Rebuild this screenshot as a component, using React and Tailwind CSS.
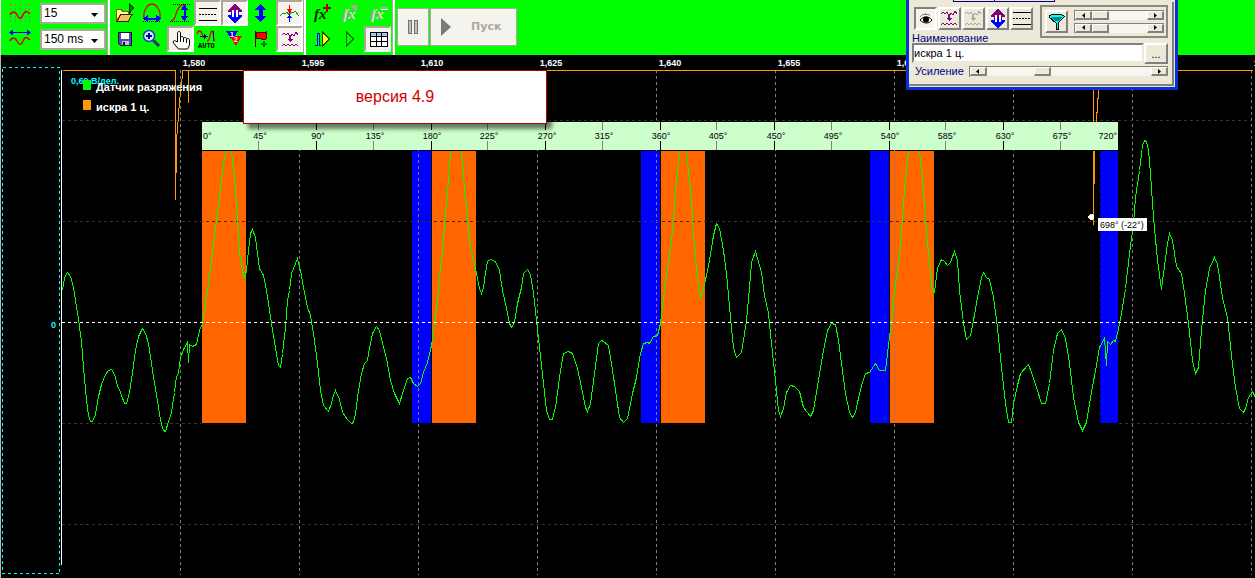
import React from 'react';

const GRID_X = [180, 299, 418, 537, 656, 775, 894, 1013, 1132, 1251];
const GRID_Y = [120, 221, 423, 524];

const TIMES = ['1,580', '1,595', '1,610', '1,625', '1,640', '1,655', '1,670', '1,685', '1,700', '1,715'];

const DEGREES = Array.from({ length: 17 }, (_, i) => i * 45);
const RULER_X = 202;
const RULER_W = 916;

// start x, width, colour
const BANDS = [
  [202, 44, '#ff6600'],
  [412, 19, '#0000ff'],
  [432, 44, '#ff6600'],
  [641, 19, '#0000ff'],
  [661, 44, '#ff6600'],
  [870, 19, '#0000ff'],
  [890, 44, '#ff6600'],
  [1100, 18, '#0000ff'],
];

// vacuum sensor samples; the signal is cut off where it runs behind the ruler
const VACUUM = [
  '62,290 64,277 67,272 70,276 73,287 75,300 78,319 81,341 83,367 86,400 88,415 90,421 92,421 95,414 98,396 101,384 105,374 108,370 111,369 114,374 117,385 120,392 124,403 126,403 129,392 132,372 135,350 138,336 142,328 145,333 148,343 151,363 154,383 157,400 160,420 163,430 165,431 168,421 171,412 174,392 176,376 178,373 180,357 183,349 187,342 188,362 189,344 192,346 196,344 199,330 202,323 207,290 211,260 215,227 219,197 222,170 225,151',
  '231,151 234,177 237,217 239,253 242,270 244,278 246,270 248,250 250,233 252,229 255,237 257,253 259,268 263,275 266,290 268,303 271,323 275,347 278,365 280,367 282,353 285,327 287,300 289,290 291,273 295,263 297,258 300,270 303,287 307,307 310,315 313,333 317,363 320,390 323,405 328,411 331,403 333,395 335,390 339,399 342,412 347,419 351,423 353,422 355,413 358,390 361,373 364,363 367,360 369,348 372,333 376,326 379,330 382,343 386,358 390,380 394,393 399,403 402,393 407,378 410,377 413,383 417,386 420,383 423,372 427,362 431,345 434,323 437,300 438,287 442,250 445,213 449,170 450,151',
  '461,151 464,187 467,220 470,247 475,268 479,288 481,293 483,287 485,272 487,261 490,259 495,261 499,270 502,290 506,308 509,323 511,327 514,322 517,303 521,287 523,273 527,269 530,274 533,293 536,320 539,347 543,383 546,410 549,419 552,419 555,407 559,377 563,353 568,351 572,353 577,368 581,387 585,407 587,411 590,403 594,373 598,343 601,340 603,341 608,345 611,363 615,390 619,417 623,422 627,418 632,393 636,377 640,353 643,343 647,342 649,343 653,336 657,335 660,323 662,307 665,283 669,253 673,223 674,200 679,151',
  '686,151 691,200 693,233 696,267 699,293 700,297 702,292 706,275 709,260 713,235 716,223 719,228 723,250 726,273 730,317 733,347 736,357 741,352 743,340 746,320 749,287 751,262 755,251 757,258 761,272 764,295 768,313 771,343 775,380 778,410 780,416 783,408 786,392 790,385 794,386 799,391 803,407 810,416 813,410 818,380 823,350 827,330 831,323 835,324 838,340 841,363 845,393 849,412 852,417 855,412 859,393 862,382 865,373 869,372 875,363 879,370 885,370 887,353 889,337 892,313 895,283 899,257 902,217 905,177 908,151',
  '919,151 922,177 925,220 929,263 932,292 934,292 937,268 941,259 944,261 947,265 950,262 954,251 957,260 959,290 963,323 966,339 970,335 973,320 977,297 981,277 983,272 986,277 989,279 993,297 997,327 1001,367 1005,403 1008,422 1011,422 1013,403 1017,385 1020,373 1028,364 1031,372 1037,390 1041,403 1045,403 1049,383 1053,350 1057,333 1061,329 1065,338 1069,363 1073,397 1078,422 1082,430 1086,422 1090,397 1095,370 1099,347 1104,338 1106,365 1107,341 1110,344 1113,340 1115,341 1118,328 1121,313 1125,288 1129,253 1133,223 1135,197 1139,170 1142,145 1144,140 1146,141 1148,150 1150,173 1153,217 1157,260 1161,289 1163,273 1167,243 1169,233 1172,240 1176,266 1181,273 1184,293 1188,323 1192,360 1195,373 1198,367 1201,330 1205,290 1209,268 1214,257 1217,264 1222,297 1227,317 1231,355 1235,387 1239,408 1243,412 1245,408 1248,397 1252,391 1255,397',
];

const SPARK = [
  '62,70 175,70 175,199',
  '176,172 176,140 177,128 178,115 179,100 181,88 182,70 188,70 188,102',
  '182,78 182,70 1252,70',
  '1093,70 1093,121',
  '1098,70 1098,98 1097,98 1097,112 1096,112 1096,121',
];

const WAVE = 'M0 4 l2 -2 l2 2 l2 -2 l2 4 l2 -3 l2 2 l2 -4 l2 3';

/* ---------- toolbar ---------- */

const Tool = ({ label, box, pressed, children }) => (
  <button
    type="button"
    aria-label={label}
    aria-pressed={pressed}
    className={
      pressed
        ? 'h-[26px] w-[27px] border-2 border-t-[#aca899] border-l-[#aca899] border-r-white border-b-white bg-[#f5f3ec]'
        : 'h-[26px] w-[27px]'
    }
  >
    <svg viewBox={box} className={pressed ? '-m-0.5 h-[26px] w-[27px]' : 'h-[26px] w-[27px]'} fill="none" shapeRendering="crispEdges">
      {children}
    </svg>
  </button>
);

const Divider = () => (
  <div className="w-[3px] shrink-0 border-l border-r-2 border-l-[#aca899] border-r-white" />
);

const Combo = ({ label, value }) => (
  <div className="relative h-[21px] w-[66px] border-2 border-[#aca899] bg-white">
    <select
      aria-label={label}
      defaultValue={value}
      className="block h-full w-full appearance-none bg-white pl-0.5 font-['Liberation_Sans',sans-serif] text-[12px] leading-[17px] text-black outline-none"
    >
      <option>{value}</option>
    </select>
    <svg viewBox="0 0 7 4" className="pointer-events-none absolute top-2 right-1.5 h-1 w-[7px]">
      <path d="M0 0h7L3.5 4z" fill="#000" />
    </svg>
  </div>
);

const LinesGlyph = ({ x, y, width = 18 }) => (
  <g stroke="#000" strokeWidth="1">
    <path d={`M${x} ${y + 0.5}h${width} M${x} ${y + 12.5}h${width}`} />
    <path d={`M${x} ${y + 6.5}h${width}`} strokeDasharray="2 1" />
  </g>
);

const UpDownGlyph = ({ x, y }) => (
  <g transform={`translate(${x} ${y})`}>
    <path d="M7 0L14 6V8H11V10H3V8H0V6z" fill="#800080" />
    <path d="M7 19L14 13V11H11V9H3V11H0V13z" fill="#0000ff" />
    <path d="M4 6h2v7h-2zM8 6h2v7h-2z" fill="#fff" />
  </g>
);

const WavesGlyph = ({ x, y, color = '#800080' }) => (
  <g transform={`translate(${x} ${y})`}>
    <path d={WAVE} stroke={color} strokeWidth="1.3" />
    <path d="M0 15 l2 -2 l2 2 l2 -2 l2 2 l2 -2 l2 2 l2 -2 l2 2" stroke={color} strokeWidth="1.3" />
    <path d="M7 6h2v2h2l-3 3l-3 -3h2z" fill={color} />
  </g>
);

const ChannelTools = () => (
  <div className="flex w-[107px] shrink-0 border-l border-white pt-[3px] pl-2">
    <div className="flex flex-col gap-[5px]">
      <svg viewBox="9 4 22 21" className="h-[21px] w-[22px]" fill="none">
        <path d="M10.5 5v18M15.5 5v18M20.5 5v18M25.5 5v18M29.5 5v18" stroke="#808080" strokeDasharray="2 2" shapeRendering="crispEdges" />
        <path d="M10 16C12 12 15 12 17 16S21 21 23 16S27 12 30 15" stroke="#d40000" strokeWidth="1.4" />
      </svg>
      <svg viewBox="9 30 22 21" className="h-[21px] w-[22px]" fill="none">
        <path d="M10 33.5h20" stroke="#00f" />
        <path d="M9 33.5l4-3v6zM31 33.5l-4-3v6z" fill="#00f" />
        <path d="M10 42C12 38 15 38 17 42S21 47 23 42S27 38 30 41" stroke="#d40000" strokeWidth="1.4" />
      </svg>
    </div>
    <div className="ml-[9px] flex flex-col gap-[5px]">
      <Combo label="Развёртка" value="15" />
      <Combo label="Длительность" value="150 ms" />
    </div>
  </div>
);

const ViewTools = () => (
  <div className="grid w-[193px] shrink-0 grid-cols-7 content-start pl-0.5">
    <Tool label="Открыть" box="113 0 27 26">
      <path d="M117.500 9.500h5l1 2h6v3h-8l-4 6z" fill="#ffff99" stroke="#806000" />
      <path d="M122 14.500h11l-4 7h-11z" fill="#f0c060" stroke="#402000" />
      <path d="M130.500 13v-9l4 4z" fill="#008000" stroke="#004000" />
    </Tool>
    <Tool label="Ширина" box="140 0 27 26">
      <path d="M145 18c-1-8 4-14 8-14s9 6 8 14" stroke="#e00000" strokeWidth="1.3" shapeRendering="auto" />
      <path d="M144 21.500h18" stroke="#000" strokeDasharray="1 1" />
      <path d="M144 18.500l5-4v3h8v-3l5 4l-5 4v-3h-8v3z" fill="#0000ff" />
    </Tool>
    <Tool label="Высота" box="167 0 27 26">
      <path d="M171 21c5-1 4-6 6-10s4-7 9-6" stroke="#e00000" strokeWidth="1.300" shapeRendering="auto" />
      <path d="M173 4.500h18M170 21.500h20" stroke="#000" strokeDasharray="1 1" />
      <path d="M184.500 5l4 5h-3v6h3l-4 5l-4-5h3v-6h-3z" fill="#0000ff" />
    </Tool>
    <Tool label="Линии" box="194 0 27 26" pressed>
      <LinesGlyph x={199} y={8} />
    </Tool>
    <Tool label="Сдвиг" box="221 0 27 26" pressed>
      <UpDownGlyph x={228} y={4} />
    </Tool>
    <Tool label="Масштаб" box="248 0 27 26">
      <path d="M260.500 4l6 6h-4v6h4l-6 6l-6-6h4v-6h-4z" fill="#0000ff" />
    </Tool>
    <Tool label="Центр" box="275 0 27 26" pressed>
      <path d="M279 16l3-3l2 1l2-2l2 3l2-3l2 1l2-2l4 5" stroke="#00a000" />
      <path d="M288.500 5v6" stroke="#f00" />
      <path d="M286 9h5l-2.500 5z" fill="#f00" />
      <path d="M288.500 17v5" stroke="#00f" />
      <path d="M286 18h5l-2.500-4z" fill="#00f" />
    </Tool>

    <Tool label="Сохранить" box="113 26 27 26">
      <path d="M119.500 32.500h13v13h-11l-2-2z" fill="#5050a0" stroke="#101040" />
      <path d="M122 33h8v6h-8z" fill="#fff" />
      <path d="M123 41h7v4h-7z" fill="#c0c0d0" />
      <path d="M124 42h2v3h-2z" fill="#101040" />
    </Tool>
    <Tool label="Увеличить" box="140 26 27 26">
      <path d="M154 40l6 6" stroke="#303070" strokeWidth="3" shapeRendering="auto" />
      <circle cx="150" cy="36" r="5.500" fill="#d8ecff" stroke="#2040a0" strokeWidth="1.500" shapeRendering="auto" />
      <path d="M147 36h6M150 33v6" stroke="#0000c0" strokeWidth="2" />
    </Tool>
    <Tool label="Рука" box="167 26 27 26" pressed>
      <path
        d="M177.500 42v-9c0-2 3-2 3 0v5c0-2 3-2 3 0v1c0-2 3-2 3 0v1c0-2 3-2 3 0v5l-2 4h-9l-5-6c-1-2 1-3 2-2z"
        fill="#fff"
        stroke="#000"
        shapeRendering="auto"
      />
      <path d="M180.500 38v4M183.500 39v3M186.500 40v3" stroke="#000" />
    </Tool>
    <Tool label="Авто" box="194 26 27 26">
      <path d="M197 34c1-4 4-4 5 0s3 4 4 2" stroke="#e00000" strokeWidth="1.300" shapeRendering="auto" />
      <path d="M207 41c3 1 3-10 5-10s1 10 3 10" stroke="#e00000" strokeWidth="1.300" shapeRendering="auto" />
      <path d="M200 36.500h5M213.500 31v10" stroke="#000080" />
      <path d="M204 34l4 2.500l-4 2.500z" fill="#000080" />
      <text x="198" y="48" fontSize="7" fontWeight="700" fill="#000" className="font-['Liberation_Mono',monospace]">AUTO</text>
    </Tool>
    <Tool label="Маркеры" box="221 26 27 26">
      <path d="M226 31h12l-6 9z" fill="#0000ff" />
      <path d="M230 36h12l-6 10z" fill="#ff0000" />
      <text x="230" y="37" fontSize="7" fontWeight="700" fill="#fff" className="font-['Liberation_Sans',sans-serif]">1</text>
      <text x="234" y="42" fontSize="7" fontWeight="700" fill="#fff" className="font-['Liberation_Sans',sans-serif]">2</text>
    </Tool>
    <Tool label="Флаг" box="248 26 27 26">
      <path d="M255.500 31v16" stroke="#400000" />
      <path d="M256 33l3-1l4 1l3-1v7l-3 1l-4-2l-3 1z" fill="#ff0000" stroke="#600" />
      <path d="M261 44h6M264 41v6" stroke="#008000" strokeWidth="2" />
    </Tool>
    <Tool label="Фильтр" box="275 26 27 26" pressed>
      <WavesGlyph x={281} y={31} />
    </Tool>
  </div>
);

const Fx = ({ x, color }) => (
  <text x={x} y="19" fontSize="15" fontStyle="italic" fontWeight="700" fill={color} className="font-['Liberation_Serif',serif]">
    fx
  </text>
);

const FunctionTools = () => (
  <div className="grid w-[86px] shrink-0 grid-cols-3 content-start pl-0.5">
    <Tool label="Добавить функцию" box="308 0 27 26">
      <Fx x={314} color="#002000" />
      <path d="M323 8h8M327 4v8" stroke="#a00000" strokeWidth="2" />
    </Tool>
    <Tool label="Изменить функцию" box="335 0 27 26">
      <Fx x={342} color="#fff" />
      <Fx x={341} color="#aca899" />
      <path d="M349 5h7v8z" fill="#aca899" />
    </Tool>
    <Tool label="Удалить функцию" box="362 0 27 26">
      <Fx x={369} color="#fff" />
      <Fx x={368} color="#aca899" />
      <path d="M378 8h8" stroke="#aca899" strokeWidth="2" />
      <path d="M379 9.500h7" stroke="#fff" />
    </Tool>
    <Tool label="Шаг" box="308 26 27 26">
      <path d="M315 45.500h2v-12h2v12h2" stroke="#00f" />
      <path d="M322.500 32v14l7-7z" fill="#ffff00" stroke="#404000" />
    </Tool>
    <Tool label="Воспроизвести" box="335 26 27 26">
      <path d="M345.500 32v14l7-7z" stroke="#007000" />
    </Tool>
    <Tool label="Таблица" box="362 26 27 26" pressed>
      <path d="M368.500 32.500h17v14h-17z" fill="#fff" stroke="#000" />
      <path d="M369 33h16v3h-16z" fill="#a0c8f0" />
      <path d="M368 36.500h18M368 41.500h18M374.500 32v14M379.500 32v14" stroke="#000" />
    </Tool>
  </div>
);

const RunButtons = () => (
  <div className="flex gap-px pt-2 pl-0.5">
    <button type="button" aria-label="Пауза" className="flex h-[38px] w-8 items-center justify-center border border-[#aca899] bg-[#f4f3ee]">
      <svg viewBox="0 0 12 16" className="h-4 w-3" fill="#c0c0c0" stroke="#707070" shapeRendering="crispEdges">
        <path d="M1.500 1.500h3v13h-3zM7.500 1.500h3v13h-3z" />
      </svg>
    </button>
    <button type="button" className="flex h-[38px] w-[87px] items-center gap-5 border border-[#aca899] bg-[#f4f3ee] pl-2.5">
      <svg viewBox="0 0 10 18" className="h-[18px] w-2.5">
        <path d="M0 0L10 9L0 18z" fill="#7a7a7a" />
      </svg>
      <span className="font-['DejaVu_Sans',sans-serif] text-[11px] font-bold text-[#aca899]">Пуск</span>
    </button>
  </div>
);

/* ---------- chart ---------- */

const Chart = () => (
  <svg viewBox="0 55 1255 523" className="block w-full bg-black font-['Liberation_Sans',sans-serif]" fill="none" shapeRendering="crispEdges">
    <path d="M0.500 55v523" stroke="#b4b4b4" />
    <rect x="2.500" y="67.500" width="57" height="506" stroke="#00ffff" strokeDasharray="3 3" />

    {TIMES.map((t, i) => (
      <text key={t} x={194 + i * 119} y="66" fontSize="9" fontWeight="700" textAnchor="middle" fill="#fff">{t}</text>
    ))}

    {BANDS.map(([x, w, color]) => (
      <rect key={x} x={x} y="151" width={w} height="272" fill={color} />
    ))}
    <path d="M1100.500 151v272" stroke="#000060" strokeDasharray="3 3" />

    {GRID_X.map((x) => (
      <path key={x} d={`M${x + 0.5} 70v505`} stroke="#808080" strokeDasharray="3 3" />
    ))}
    {GRID_Y.map((y) => (
      <path
        key={y}
        d={y === 423 ? 'M62 423.500H202M1119 423.500H1252' : `M62 ${y + 0.5}H1252`}
        stroke="#333"
        strokeDasharray="3 3"
      />
    ))}
    <path d="M61.500 70v495" stroke="#fff" />

    {SPARK.map((points) => (
      <polyline key={points} points={points} transform="translate(0.500 0.500)" stroke="#ff9900" />
    ))}
    <path d="M1093 151h2v33h-1v41h-1z" fill="#ff9900" />

    {VACUUM.map((points) => (
      <polyline key={points} points={points} transform="translate(0.500 0.500)" stroke="#00ff00" />
    ))}
    <path d="M62 322.500H1252" stroke="#fff" strokeDasharray="3 3" />

    <rect x={RULER_X} y="122" width={RULER_W} height="28" fill="#ccffcc" />
    {DEGREES.slice(1, -1).map((deg) => {
      const x = Math.round(RULER_X + (deg * RULER_W) / 720) - (deg % 180 ? 1 : 0);
      return (
        <path key={deg} d={`M${x + 0.5} 122v8M${x + 0.5} 141v9`} stroke={deg % 90 ? '#808080' : '#000'} />
      );
    })}
    {DEGREES.map((deg) => {
      const x = deg === 0 ? 203 : deg === 720 ? 1117 : Math.round(RULER_X + (deg * RULER_W) / 720) + 1;
      const anchor = deg === 0 ? 'start' : deg === 720 ? 'end' : 'middle';
      return (
        <text key={deg} x={x} y="139" fontSize="9" textAnchor={anchor} fill="#000">{`${deg}°`}</text>
      );
    })}

    <text x="71" y="84" fontSize="9" fontWeight="700" fill="#00ffff">0,69 В/дел.</text>
    <text x="51" y="328" fontSize="9" fontWeight="700" fill="#00ffff">0</text>
    <rect x="83" y="80" width="8" height="10" fill="#00ff00" />
    <rect x="83" y="100" width="8" height="10" fill="#ff9900" />
    <text x="96" y="91" fontSize="11" fontWeight="700" fill="#fff">Датчик разряжения</text>
    <text x="96" y="111" fontSize="11" fontWeight="700" fill="#fff">искра 1 ц.</text>

    <path d="M1090 214h2l2 2v2l-2 2h-2l-2-2v-2z" fill="#fff" />
    <rect x="1098" y="218" width="49" height="13" fill="#fff" />
    <text x="1100" y="228" fontSize="9" fill="#000">698° (-22°)</text>
  </svg>
);

/* ---------- channel window ---------- */

const PanelButton = ({ label, pressed, children }) => (
  <button
    type="button"
    aria-label={label}
    aria-pressed={pressed}
    className={
      pressed
        ? 'flex size-[23px] shrink-0 items-center justify-center border-2 border-t-[#808080] border-l-[#808080] border-r-white border-b-white bg-[#f5f3ec]'
        : 'flex size-[23px] shrink-0 items-center justify-center border-2 border-t-white border-l-white border-r-[#808080] border-b-[#808080] bg-[#ece9d8]'
    }
  >
    <svg viewBox="0 0 19 19" className="size-[19px]" fill="none" shapeRendering="crispEdges">
      {children}
    </svg>
  </button>
);

const Arrow = ({ d }) => (
  <span className="flex h-[9px] w-[17px] shrink-0 items-center justify-center border-t border-l border-r-2 border-b-2 border-t-white border-l-white border-r-[#808080] border-b-[#808080] bg-[#ece9d8]">
    <svg viewBox="0 0 3 5" className="h-[5px] w-[3px]"><path d={d} fill="#000" /></svg>
  </span>
);

const SLIDER =
  "h-[9px] w-0 min-w-0 flex-1 appearance-none bg-[#f7f5ee] [&::-webkit-slider-thumb]:h-[9px] [&::-webkit-slider-thumb]:w-[17px] [&::-webkit-slider-thumb]:appearance-none [&::-webkit-slider-thumb]:border-t [&::-webkit-slider-thumb]:border-l [&::-webkit-slider-thumb]:border-r-2 [&::-webkit-slider-thumb]:border-b-2 [&::-webkit-slider-thumb]:border-t-white [&::-webkit-slider-thumb]:border-l-white [&::-webkit-slider-thumb]:border-r-[#808080] [&::-webkit-slider-thumb]:border-b-[#808080] [&::-webkit-slider-thumb]:bg-[#ece9d8]";

const Slider = ({ id, label, value }) => (
  <div className="flex h-[11px] min-w-0 flex-1 items-center border-t border-l border-[#808080]">
    <Arrow d="M3 0v5L0 2.5z" />
    <input id={id} type="range" aria-label={label} defaultValue={value} className={SLIDER} />
    <Arrow d="M0 0v5L3 2.5z" />
  </div>
);

const ChannelWindow = () => (
  <section className="absolute top-0 left-[906px] w-[272px] border-x-[3px] border-b-[3px] border-[#0831d9] bg-[#ece9d8] font-['Liberation_Sans',sans-serif] text-[11px] text-[#000080]">
    <div className="flex h-0.5 pl-[44px]">
      <span className="w-[42px] border-x border-b border-[#000080]" />
      <span className="w-[60px] border-r border-b border-[#000080]" />
    </div>
    <div className="mr-px mb-px border-r-2 border-b-2 border-[#808080] pr-1 pb-[7px] pl-[3px]">
      <div className="flex items-start justify-between pt-[3px]">
        <div className="flex gap-px pt-0.5 pl-0.5">
          <PanelButton label="Показать" pressed>
            <path d="M4 7c4-4 9-3 12 1l-2-1c-4-2-6-2-10 1z" fill="#808080" />
            <path d="M4 11c3-4 9-4 12 0c-3 4-8 4-12 0z" fill="#fff" stroke="#000" shapeRendering="auto" />
            <circle cx="10" cy="10.500" r="3" fill="#000" shapeRendering="auto" />
          </PanelButton>
          <PanelButton label="Фильтр">
            <WavesGlyph x={1} y={1} />
          </PanelButton>
          <PanelButton label="Сглаживание">
            <WavesGlyph x={1} y={1} color="#aca899" />
          </PanelButton>
          <PanelButton label="Сдвиг">
            <UpDownGlyph x={3} y={0} />
          </PanelButton>
          <PanelButton label="Линии">
            <LinesGlyph x={1} y={3} width={18} />
          </PanelButton>
        </div>
        <div className="flex h-[33px] w-32 gap-1.5 border-2 border-[#8c8a80] py-[3px] pr-0.5 pl-[3px]">
          <PanelButton label="Настройка фильтра">
            <path d="M2 4l4-2h7l4 2v1l-6 6v6h-2v-6l-7-6z" fill="#00ffff" stroke="#000" />
            <path d="M4 5h11l-4 4h-3z" fill="#008080" />
          </PanelButton>
          <div className="flex min-w-0 flex-1 flex-col gap-0.5">
            <Slider label="Верхняя частота" value={0} />
            <Slider label="Нижняя частота" value={0} />
          </div>
        </div>
      </div>
      <label htmlFor="channel-name" className="block h-[5px] leading-[0px]">Наименование</label>
      <div className="flex">
        <input
          id="channel-name"
          defaultValue="искра 1 ц."
          className="h-5 min-w-0 flex-1 border-2 border-t-[#808080] border-l-[#808080] border-r-[#ece9d8] border-b-[#ece9d8] bg-white text-[11px] text-black outline-none"
        />
        <button type="button" className="h-[21px] w-6 border-2 border-t-white border-l-white border-r-[#808080] border-b-[#808080] text-[11px] leading-3 text-black">
          ...
        </button>
      </div>
      <div className="flex h-[13px] items-center gap-[5px] pt-px pl-[3px]">
        <label htmlFor="gain" className="leading-3">Усиление</label>
        <Slider id="gain" value={32} />
      </div>
    </div>
  </section>
);

export default function App() {
  return (
    <main className="relative min-h-screen overflow-hidden bg-black">
      <header className="flex h-[55px] bg-[#00ff00]">
        <ChannelTools />
        <Divider />
        <ViewTools />
        <Divider />
        <FunctionTools />
        <Divider />
        <RunButtons />
      </header>
      <Chart />
      <div className="absolute top-[70px] left-[243px] flex h-[54px] w-[304px] items-center justify-center border border-[#b00000] bg-white font-['Liberation_Sans',sans-serif] text-[16px] text-[#cc0000] shadow-[5px_5px_4px_rgba(0,0,0,0.5)]">
        версия 4.9
      </div>
      <ChannelWindow />
    </main>
  );
}
